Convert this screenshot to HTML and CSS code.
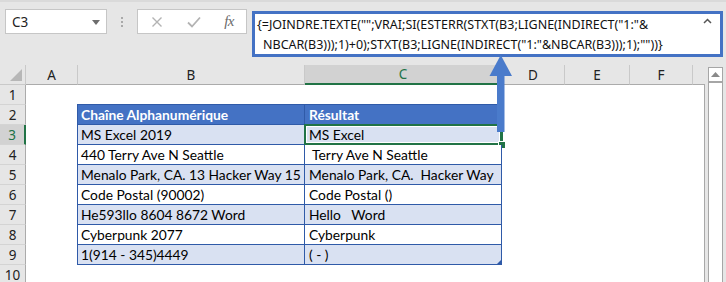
FILE: index.html
```html
<!DOCTYPE html>
<html lang="fr">
<head>
<meta charset="utf-8">
<link rel="stylesheet" href="styles.css">
</head>
<body>
<div class="app">
  <div class="fbar">
    <div class="namebox"><span class="nb-text">C3</span><svg class="nb-drop" width="8" height="5" viewBox="0 0 8 5"><polygon points="0,0 8,0 4,5" fill="#6d6d6d"/></svg></div>
    <div class="dots"><i></i><i></i><i></i></div>
    <div class="fxbox">
      <svg class="ico" width="12" height="12" viewBox="0 0 12 12"><path d="M1.5 1.5 L10.5 10.5 M10.5 1.5 L1.5 10.5" stroke="#b3b3b3" stroke-width="1.4" fill="none"/></svg>
      <svg class="ico" width="14" height="12" viewBox="0 0 14 12"><path d="M1 6.5 L5 10.5 L13 1.5" stroke="#b3b3b3" stroke-width="1.8" fill="none"/></svg>
      <span class="fx">fx</span>
    </div>
    <div class="formula">
      <div class="fline">{=JOINDRE.TEXTE("";VRAI;SI(ESTERR(STXT(B3;LIGNE(INDIRECT("1:"&amp;</div>
      <div class="fline l2">NBCAR(B3)));1)+0);STXT(B3;LIGNE(INDIRECT("1:"&amp;NBCAR(B3)));1);""))}</div>
      <svg class="caret" width="9" height="6" viewBox="0 0 9 6"><path d="M1 5 L4.5 1.5 L8 5" stroke="#555" stroke-width="1.5" fill="none"/></svg>
    </div>
  </div>
  <div class="sheet">
    <div class="grid">
      <div class="corner"><svg width="12" height="12" viewBox="0 0 12 12"><polygon points="12,0 12,12 0,12" fill="#b7b7b7"/></svg></div>
      <div class="ch">A</div>
      <div class="ch">B</div>
      <div class="ch sel">C</div>
      <div class="ch">D</div>
      <div class="ch">E</div>
      <div class="ch">F</div>
      <div class="ch-fill"></div>

      <div class="rh">1</div><div class="c"></div><div class="c"></div><div class="c"></div><div class="c"></div><div class="c"></div><div class="c"></div><div class="c end"></div>

      <div class="rh">2</div><div class="c"></div><div class="t th tl tt">Chaîne Alphanumérique</div><div class="t th tt">Résultat</div><div class="c"></div><div class="c"></div><div class="c"></div><div class="c end"></div>

      <div class="rh rsel">3</div><div class="c"></div><div class="t band tl">MS Excel 2019</div><div class="t band active">MS Excel<span class="handle"></span></div><div class="c"></div><div class="c"></div><div class="c"></div><div class="c end"></div>

      <div class="rh">4</div><div class="c"></div><div class="t tl">440 Terry Ave N Seattle</div><div class="t">&nbsp;Terry Ave N Seattle</div><div class="c"></div><div class="c"></div><div class="c"></div><div class="c end"></div>

      <div class="rh">5</div><div class="c"></div><div class="t band tl">Menalo Park, CA. 13 Hacker Way 15</div><div class="t band">Menalo Park, CA.&nbsp; Hacker Way</div><div class="c"></div><div class="c"></div><div class="c"></div><div class="c end"></div>

      <div class="rh">6</div><div class="c"></div><div class="t tl">Code Postal (90002)</div><div class="t">Code Postal ()</div><div class="c"></div><div class="c"></div><div class="c"></div><div class="c end"></div>

      <div class="rh">7</div><div class="c"></div><div class="t band tl">He593llo 8604 8672 Word</div><div class="t band">Hello &nbsp; Word</div><div class="c"></div><div class="c"></div><div class="c"></div><div class="c end"></div>

      <div class="rh">8</div><div class="c"></div><div class="t tl">Cyberpunk 2077</div><div class="t">Cyberpunk</div><div class="c"></div><div class="c"></div><div class="c"></div><div class="c end"></div>

      <div class="rh">9</div><div class="c"></div><div class="t band tl">1(914 - 345)4449</div><div class="t band">( - )<span class="resize"></span></div><div class="c"></div><div class="c"></div><div class="c"></div><div class="c end"></div>

      <div class="rh">10</div><div class="c"></div><div class="c"></div><div class="c"></div><div class="c"></div><div class="c"></div><div class="c"></div><div class="c end"></div>
    </div>
    <div class="vscroll">
      <div class="vs-btn"><svg width="9" height="5" viewBox="0 0 9 5"><polygon points="0,5 9,5 4.5,0" fill="#8a8a8a"/></svg></div>
    </div>
  </div>
  <svg class="arrow" width="24" height="80" viewBox="0 0 24 80">
    <rect x="8" y="18" width="7.5" height="59" fill="#4a7bcb"/>
    <polygon points="0.5,21 11.75,0 23,21" fill="#4a7bcb"/>
  </svg>
</div>
</body>
</html>
```

FILE: styles.css
```css
* { box-sizing: border-box; }
html, body { margin: 0; padding: 0; }
body {
  background: #e6e6e6;
  width: 726px;
  height: 282px;
  overflow: hidden;
  font-family: "Noto Sans", "Open Sans", sans-serif;
}
.app { position: relative; width: 726px; height: 282px; }

.fbar {
  height: 65px;
  display: flex;
  align-items: flex-start;
  padding: 9px 0 0 5px;
  background: #e6e6e6;
  border-top: 2px solid #dadada;
}
.namebox {
  width: 102px;
  height: 25px;
  margin-top: -2px;
  background: #fff;
  border: 1px solid #c6c6c6;
  display: flex;
  align-items: center;
  justify-content: space-between;
  padding: 0 6px 0 6px;
  font-size: 13.5px;
  color: #222;
}
.nb-drop { margin-top: 1px; }
.dots {
  width: 30px;
  height: 25px;
  margin-top: -2px;
  display: flex;
  flex-direction: column;
  align-items: center;
  justify-content: center;
  gap: 2px;
}
.dots i { display: block; width: 2px; height: 2px; background: #a9a9a9; }
.fxbox {
  width: 110px;
  height: 25px;
  margin-top: -2px;
  background: #fff;
  border: 1px solid #c6c6c6;
  display: flex;
  align-items: center;
  justify-content: space-between;
  padding: 0 12px 0 13px;
}
.fx {
  font-family: "Liberation Serif", "DejaVu Serif", serif;
  font-style: italic;
  font-size: 15px;
  color: #6b6b6b;
  letter-spacing: -0.5px;
}
.formula {
  position: relative;
  width: 471px;
  height: 46px;
  margin-left: 5px;
  background: #fff;
  border: 3px solid #4472c4;
  padding: 1px 0 0 2px;
  font-size: 12.5px;
  line-height: 20px;
  color: #111;
  white-space: nowrap;
}
.fline.l2 { padding-left: 6px; }
.caret { position: absolute; right: 8px; top: 4px; }

.sheet {
  display: flex;
  align-items: stretch;
  height: 217px;
}
.grid {
  width: 705px;
  display: grid;
  grid-template-columns: 26px 52px 227px 197px 63px 65px 63px 12px;
  grid-template-rows: repeat(11, 20px);
  background: #fff;
  font-family: "Lato", "Open Sans", sans-serif;
  font-size: 13.8px;
}
.corner {
  background: #e6e6e6;
  border-right: 1px solid #c9c9c9;
  border-bottom: 1px solid #c9c9c9;
  display: flex;
  align-items: flex-end;
  justify-content: flex-end;
  padding: 0 3px 3px 0;
}
.ch {
  background: #e6e6e6;
  border-right: 1px solid #c9c9c9;
  border-bottom: 1px solid #ababab;
  display: flex;
  align-items: center;
  justify-content: center;
  font-family: "Noto Sans", "Open Sans", sans-serif;
  font-size: 13.5px;
  color: #222;
}
.ch.sel {
  background: #d2d2d2;
  border-bottom: 2px solid #217346;
  color: #217346;
}
.ch-fill { background: #e6e6e6; border-bottom: 1px solid #ababab; }
.rh {
  background: #e6e6e6;
  border-right: 1px solid #ababab;
  border-bottom: 1px solid #d4d4d4;
  display: flex;
  align-items: center;
  justify-content: center;
  font-family: "Noto Sans", "Open Sans", sans-serif;
  font-size: 13.5px;
  color: #222;
}
.rh.rsel {
  background: #d2d2d2;
  border-right: 2px solid #217346;
  color: #217346;
}
.c { background: #fff; }
.c.end { border-right: 1px solid #a8a8a8; }
.t {
  position: relative;
  border-right: 1px solid #2f5aa8;
  border-bottom: 1px solid #2f5aa8;
  padding: 0 0 0 4px;
  line-height: 19px;
  white-space: nowrap;
  overflow: visible;
  color: #000;
  background: #fff;
}
.t.tl { border-left: 1px solid #2f5aa8; padding-left: 3px; margin-left: -1px; }
.t.tt { border-top: 1px solid #2f5aa8; margin-top: -1px; line-height: 19px; }
.t.band { background: #d9e1f2; }
.t.th {
  background: #4472c4;
  color: #fff;
  font-weight: bold;
}
.t.active {
  box-shadow: 0 0 0 1px #217346, inset 0 0 0 1px #217346, inset 0 0 0 2px #fff;
  border-right-color: #217346;
  border-bottom-color: #217346;
}
.handle {
  position: absolute;
  right: -4px;
  bottom: -4px;
  width: 6px;
  height: 6px;
  background: #217346;
  border: 1px solid #fff;
  box-sizing: content-box;
  margin: -1px;
}
.resize {
  position: absolute;
  right: 0;
  bottom: 0;
  width: 0;
  height: 0;
  border-left: 4px solid transparent;
  border-bottom: 4px solid #2f5aa8;
}

.vscroll {
  width: 15px;
  margin-left: 3px;
  margin-top: 2px;
  background: #fff;
  border: 1px solid #a6a6a6;
  border-bottom: none;
}
.vs-btn {
  height: 15px;
  border-bottom: 2px solid #a6a6a6;
  display: flex;
  align-items: center;
  justify-content: center;
}

.arrow {
  position: absolute;
  left: 489px;
  top: 55px;
}
```
